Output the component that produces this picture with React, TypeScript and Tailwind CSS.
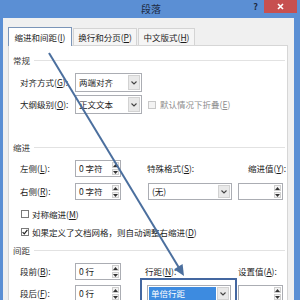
import React from "react";

function K({ k }: { k: string }) {
  return <span className="underline underline-offset-[1px]">{k}</span>;
}

function Lbl({ t, k, colon = true }: { t: string; k: string; colon?: boolean }) {
  return (
    <span className="whitespace-nowrap">
      {t}(<K k={k} />){colon ? ":" : ""}
    </span>
  );
}

function Spinner() {
  return (
    <div className="flex w-[8px] flex-col gap-[1px] py-[1px] pr-[1px]">
      <div className="flex flex-1 items-center justify-center border border-[#cfcfcf] bg-[#f4f4f4]">
        <svg width="5" height="3" viewBox="0 0 5 3">
          <path d="M0 3L2.5 0L5 3Z" fill="#333" />
        </svg>
      </div>
      <div className="flex flex-1 items-center justify-center border border-[#cfcfcf] bg-[#f4f4f4]">
        <svg width="5" height="3" viewBox="0 0 5 3">
          <path d="M0 0L2.5 3L5 0Z" fill="#333" />
        </svg>
      </div>
    </div>
  );
}

function Chevron() {
  return (
    <svg width="6" height="4" viewBox="0 0 6 4">
      <path d="M0.5 0.5L3 3L5.5 0.5" fill="none" stroke="#444" strokeWidth="1.1" />
    </svg>
  );
}

function DropBtn() {
  return (
    <div className="my-[1px] mr-[1px] flex w-[12px] items-center justify-center border border-[#d2d2d2] bg-[#e9e9e9]">
      <Chevron />
    </div>
  );
}

function Section({ t }: { t: string }) {
  return (
    <div className="flex h-[14px] items-center pl-[4px]">
      <span className="text-[#3a3a3a]">{t}</span>
      <div className="ml-[4px] mr-[2px] h-px flex-1 bg-[#e2e2e2]" />
    </div>
  );
}

function Box({ children }: { children?: React.ReactNode }) {
  return <div className="flex flex-1 items-center pl-[3px]">{children}</div>;
}

export default function App() {
  return (
    <div className="relative flex h-[300px] w-[300px] flex-col overflow-hidden bg-[#5b8fd4] text-[8.5px] leading-none text-[#1c1c1c] font-[family-name:'Noto_Sans_CJK_SC','Noto_Sans',sans-serif]">
      {/* title bar */}
      <div className="grid h-[18px] shrink-0 grid-cols-[1fr_auto_1fr]">
        <div />
        <div className="flex items-center pl-[2px] text-[10px] text-[#1d2b44]">段落</div>
        <div className="flex items-start justify-end">
          <span className="mr-[6px] mt-[2px] text-[9px] font-bold text-[#1d2b44]">?</span>
          <div className="mr-[3px] flex h-[13px] w-[33px] items-center justify-center bg-[#c75050]">
            <svg width="7" height="7" viewBox="0 0 7 7">
              <path d="M1 1L6 6M6 1L1 6" stroke="#fff" strokeWidth="1.6" />
            </svg>
          </div>
        </div>
      </div>

      {/* body */}
      <div className="ml-[3px] mr-[6px] flex flex-1 flex-col bg-[#f0f0f0] pl-[5px] pr-[6px] pt-[9px]">
        {/* tabs */}
        <div className="flex h-[18px] items-end">
          <div className="relative z-10 -mb-px flex h-[19px] w-[64px] items-center justify-center border border-b-0 border-[#7b95b8] bg-white">
            <Lbl t="缩进和间距" k="I" colon={false} />
          </div>
          <div className="ml-px flex h-[17px] w-[64px] items-center justify-center border border-b-0 border-[#d4d4d4] bg-[#f5f5f5]">
            <Lbl t="换行和分页" k="P" colon={false} />
          </div>
          <div className="ml-px flex h-[17px] w-[57px] items-center justify-center border border-b-0 border-[#d4d4d4] bg-[#f5f5f5]">
            <Lbl t="中文版式" k="H" colon={false} />
          </div>
        </div>

        {/* panel */}
        <div className="flex flex-1 flex-col border border-[#d6d6d6] bg-white pt-[7px]">
          <Section t="常规" />

          <div className="mt-[6px] flex h-[19px] pl-[11px]">
            <div className="flex w-[55px] items-center">
              <Lbl t="对齐方式" k="G" />
            </div>
            <div className="flex w-[67px] border border-[#abadb3] bg-white">
              <Box>两端对齐</Box>
              <DropBtn />
            </div>
          </div>

          <div className="mt-[3px] flex h-[19px] pl-[11px]">
            <div className="flex w-[55px] items-center">
              <Lbl t="大纲级别" k="O" />
            </div>
            <div className="flex w-[67px] border border-[#abadb3] bg-white">
              <Box>正文文本</Box>
              <DropBtn />
            </div>
            <div className="ml-[6px] flex items-center text-[#8e8e8e]">
              <div className="h-[8px] w-[8px] border border-[#c8c8c8] bg-[#f3f3f3]" />
              <span className="ml-[4px]">
                默认情况下折叠(<K k="E" />)
              </span>
            </div>
          </div>

          <div className="mt-[26px]">
            <Section t="缩进" />
          </div>

          <div className="mt-[6px] flex h-[17px] pl-[11px]">
            <div className="flex w-[55px] items-center">
              <Lbl t="左侧" k="L" />
            </div>
            <div className="flex w-[46px] border border-[#abadb3] bg-white">
              <Box>0 字符</Box>
              <Spinner />
            </div>
            <div className="ml-[26px] flex w-[101px] items-center">
              <Lbl t="特殊格式" k="S" />
            </div>
            <div className="flex items-center">
              <Lbl t="缩进值" k="Y" />
            </div>
          </div>

          <div className="mt-[6px] flex h-[17px] pl-[11px]">
            <div className="flex w-[55px] items-center">
              <Lbl t="右侧" k="R" />
            </div>
            <div className="flex w-[46px] border border-[#abadb3] bg-white">
              <Box>0 字符</Box>
              <Spinner />
            </div>
            <div className="ml-[27px] flex w-[84px] border border-[#abadb3] bg-white">
              <Box>(无)</Box>
              <DropBtn />
            </div>
            <div className="ml-[6px] flex w-[45px] border border-[#abadb3] bg-white">
              <Box />
              <Spinner />
            </div>
          </div>

          <div className="mt-[7px] flex h-[14px] items-center pl-[12px]">
            <div className="h-[8px] w-[8px] border border-[#7a7a7a] bg-white" />
            <span className="ml-[3px]">
              对称缩进(<K k="M" />)
            </span>
          </div>

          <div className="mt-[4px] flex h-[14px] items-center pl-[12px]">
            <div className="flex h-[8px] w-[8px] items-center justify-center border border-[#7a7a7a] bg-white">
              <svg width="6" height="6" viewBox="0 0 6 6">
                <path d="M0.6 3.2L2.3 4.9L5.4 0.9" fill="none" stroke="#222" strokeWidth="1.2" />
              </svg>
            </div>
            <span className="ml-[3px]">
              如果定义了文档网格，则自动调整右缩进(<K k="D" />)
            </span>
          </div>

          <div className="mt-[4px]">
            <Section t="间距" />
          </div>

          <div className="mt-[6px] flex h-[17px] pl-[11px]">
            <div className="flex w-[55px] items-center">
              <Lbl t="段前" k="B" />
            </div>
            <div className="flex w-[46px] border border-[#abadb3] bg-white">
              <Box>0 行</Box>
              <Spinner />
            </div>
            <div className="ml-[24px] flex w-[93px] items-center">
              <Lbl t="行距" k="N" />
            </div>
            <div className="flex items-center">
              <Lbl t="设置值" k="A" />
            </div>
          </div>

          <div className="mt-[5px] flex h-[17px] pl-[11px]">
            <div className="flex w-[55px] items-center">
              <Lbl t="段后" k="F" />
            </div>
            <div className="flex w-[46px] border border-[#abadb3] bg-white">
              <Box>0 行</Box>
              <Spinner />
            </div>
            <div className="relative ml-[26px] flex w-[84px] border border-[#abadb3] bg-white">
              <div className="m-[1px] flex flex-1 items-center bg-[#3d8be0] pl-[2px] text-white">单倍行距</div>
              <DropBtn />
              <div className="absolute -left-[8px] -top-[8px] h-[30px] w-[97px] border-2 border-[#4467a0]" />
            </div>
            <div className="ml-[7px] flex w-[45px] border border-[#abadb3] bg-white">
              <Box />
              <Spinner />
            </div>
          </div>
        </div>
      </div>

      {/* annotation arrow */}
      <svg className="pointer-events-none absolute left-0 top-0" width="300" height="300" viewBox="0 0 300 300">
        <line x1="49" y1="53" x2="178.5" y2="267" stroke="#4b6f9e" strokeWidth="2" />
        <path d="M184 276L182.6 264L174 269.2Z" fill="#4b6f9e" />
      </svg>
    </div>
  );
}
